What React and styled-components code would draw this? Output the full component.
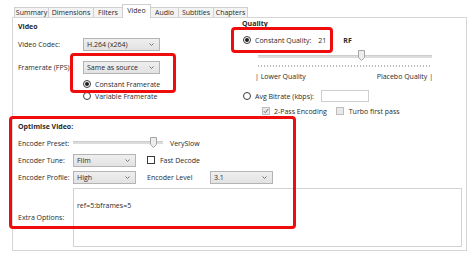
import React from "react";
import styled, { createGlobalStyle } from "styled-components";

const Global = createGlobalStyle`
  html, body { margin: 0; padding: 0; background: #fff; }
  body {
    font-family: "Open Sans", "Noto Sans", sans-serif;
    font-size: 7px;
    color: #2a2a2a;
  }
  * { box-sizing: border-box; }
`;

const Page = styled.div`
  position: relative;
  width: 474px;
  height: 259px;
  overflow: hidden;
  padding: 4px 0 0 12px;
`;

const TabStrip = styled.div`
  display: flex;
  align-items: flex-end;
  height: 13px;
  margin-left: 2px;
  position: relative;
  z-index: 1;
`;

const Tab = styled.div`
  width: ${(p) => p.$w}px;
  height: ${(p) => (p.$active ? 14 : 10)}px;
  margin-bottom: ${(p) => (p.$active ? -1 : 0)}px;
  margin-left: -1px;
  border: 1px solid #cfcfcf;
  border-bottom: none;
  background: ${(p) => (p.$active ? "#fff" : "#f3f3f3")};
  display: flex;
  align-items: ${(p) => (p.$active ? "flex-start" : "center")};
  padding-top: ${(p) => (p.$active ? 2 : 0)}px;
  justify-content: center;
  white-space: nowrap;
  line-height: 8px;
  &:first-child { margin-left: 0; }
`;

const Panel = styled.div`
  width: 455px;
  height: 234px;
  border: 1px solid #d6d6d6;
  padding-left: 5px;
  display: flex;
  flex-direction: column;
`;

const TopSection = styled.div`
  display: flex;
  height: 102px;
`;

const LeftCol = styled.div`
  width: 222px;
  display: flex;
  flex-direction: column;
`;

const RightCol = styled.div`
  flex: 1;
  display: flex;
  flex-direction: column;
`;

const BottomSection = styled.div`
  display: flex;
  flex-direction: column;
`;

const GroupTitle = styled.div`
  height: ${(p) => p.$h}px;
  margin-top: ${(p) => p.$mt || 0}px;
  padding-left: ${(p) => p.$pl || 0}px;
  display: flex;
  align-items: center;
  font-weight: 700;
  white-space: nowrap;
`;

const Row = styled.div`
  display: flex;
  align-items: center;
  height: ${(p) => p.$h}px;
  margin-top: ${(p) => p.$mt || 0}px;
  padding-left: ${(p) => p.$pl || 0}px;
  white-space: nowrap;
`;

const Label = styled.span`
  width: ${(p) => p.$w}px;
  flex: none;
`;

const Text = styled.span`
  margin-left: ${(p) => p.$ml || 0}px;
  width: ${(p) => (p.$w ? `${p.$w}px` : "auto")};
  flex: none;
  font-weight: ${(p) => (p.$bold ? 700 : 400)};
  color: ${(p) => (p.$muted ? "#555" : "inherit")};
`;

const SelectBox = styled.div`
  width: ${(p) => p.$w}px;
  height: 13px;
  flex: none;
  border: 1px solid #b4b4b4;
  background: linear-gradient(#efefef, #e2e2e2);
  display: flex;
  align-items: center;
  justify-content: space-between;
  padding: 0 5px 0 3px;
`;

const Chevron = () => (
  <svg width="5" height="3" viewBox="0 0 5 3">
    <path d="M0.5 0.5 L2.5 2.5 L4.5 0.5" fill="none" stroke="#6a6a6a" strokeWidth="0.9" />
  </svg>
);

const Select = ({ children, w }) => (
  <SelectBox $w={w}>
    <span>{children}</span>
    <Chevron />
  </SelectBox>
);

const Radio = styled.span`
  width: 8px;
  height: 8px;
  flex: none;
  border-radius: 50%;
  border: 1px solid #3a3a3a;
  background: #fff;
  display: inline-flex;
  align-items: center;
  justify-content: center;
  &::after {
    content: "";
    width: 4px;
    height: 4px;
    border-radius: 50%;
    background: #1e1e1e;
    display: ${(p) => (p.$checked ? "block" : "none")};
  }
`;

const CheckBox = styled.span`
  width: 8px;
  height: 8px;
  flex: none;
  margin-left: ${(p) => p.$ml || 0}px;
  border: 1px solid ${(p) => (p.$disabled ? "#bdbdbd" : "#3a3a3a")};
  background: ${(p) => (p.$disabled ? "#e9e9e9" : "#fff")};
  display: inline-flex;
  align-items: center;
  justify-content: center;
`;

const Check = () => (
  <svg width="6" height="6" viewBox="0 0 6 6">
    <path d="M0.8 3.2 L2.3 4.7 L5.2 1" fill="none" stroke="#6d6d6d" strokeWidth="1" />
  </svg>
);

const Slider = styled.div`
  position: relative;
  width: ${(p) => p.$w}px;
  height: 13px;
  flex: none;
  margin-left: ${(p) => p.$ml || 0}px;
  margin-top: ${(p) => p.$mt || 0}px;
  &::before {
    content: "";
    position: absolute;
    left: 0;
    right: 0;
    top: ${(p) => p.$trackTop}px;
    height: 2px;
    background: #dcdcdc;
    border-top: 1px solid #cdcdcd;
  }
`;

const ThumbWrap = styled.span`
  position: absolute;
  top: 0;
  display: block;
  width: 7px;
  height: 11px;
`;

const Thumb = ({ left }) => (
  <ThumbWrap style={{ left }}>
    <svg width="7" height="11" viewBox="0 0 7 11">
      <path d="M0.5 0.5 H6.5 V7.5 L3.5 10.5 L0.5 7.5 Z" fill="#ededed" stroke="#a5a5a5" />
    </svg>
  </ThumbWrap>
);

const Ticks = styled.div`
  width: ${(p) => p.$w}px;
  height: 2px;
  margin-left: ${(p) => p.$ml}px;
  margin-top: ${(p) => p.$mt}px;
  background: repeating-linear-gradient(90deg, #b9b9b9 0 1px, transparent 1px 3px);
`;

const ScaleLabels = styled.div`
  width: ${(p) => p.$w}px;
  height: 10px;
  margin-left: ${(p) => p.$ml}px;
  margin-top: ${(p) => p.$mt}px;
  display: flex;
  align-items: center;
  justify-content: space-between;
  white-space: nowrap;
`;

const InputBox = styled.span`
  width: ${(p) => p.$w}px;
  height: 12px;
  margin-left: ${(p) => p.$ml || 0}px;
  flex: none;
  border: 1px solid #cfcfcf;
  background: #fff;
`;

const TextArea = styled.div`
  width: 389px;
  height: 59px;
  flex: none;
  border: 1px solid #d2d2d2;
  padding: 12px 0 0 3px;
  background: #fff;
`;

const Callout = styled.div`
  position: absolute;
  left: ${(p) => p.$x}px;
  top: ${(p) => p.$y}px;
  width: ${(p) => p.$w}px;
  height: ${(p) => p.$h}px;
  border: 3px solid #ee0c0c;
  border-radius: 4px;
  pointer-events: none;
  z-index: 5;
`;

const tabs = [
  ["Summary", 35],
  ["Dimensions", 46],
  ["Filters", 30],
  ["Video", 29],
  ["Audio", 29],
  ["Subtitles", 36],
  ["Chapters", 35],
];

export default function App() {
  return (
    <Page>
      <Global />
      <TabStrip>
        {tabs.map(([t, w]) => (
          <Tab key={t} $w={w} $active={t === "Video"}>
            {t}
          </Tab>
        ))}
      </TabStrip>
      <Panel>
        <TopSection>
          <LeftCol>
            <GroupTitle $h={14} $mt={1}>Video</GroupTitle>
            <Row $h={14} $mt={4}>
              <Label $w={65}>Video Codec:</Label>
              <Select w={77}>H.264 (x264)</Select>
            </Row>
            <Row $h={14} $mt={9}>
              <Label $w={65}>Framerate (FPS):</Label>
              <Select w={77}>Same as source</Select>
            </Row>
            <Row $h={12} $mt={4} $pl={65}>
              <Radio $checked />
              <Text $ml={4}>Constant Framerate</Text>
            </Row>
            <Row $h={12} $pl={65}>
              <Radio />
              <Text $ml={4}>Variable Framerate</Text>
            </Row>
          </LeftCol>
          <RightCol>
            <GroupTitle $h={10} $pl={2}>Quality</GroupTitle>
            <Row $h={14} $mt={5} $pl={3}>
              <Radio $checked />
              <Text $ml={4}>Constant Quality:</Text>
              <Text $ml={7}>21</Text>
              <Text $ml={17} $bold>RF</Text>
            </Row>
            <Slider $w={174} $ml={18} $mt={3} $trackTop={5}>
              <Thumb left={100} />
            </Slider>
            <Ticks $w={174} $ml={18} $mt={2} />
            <ScaleLabels $w={178} $ml={15} $mt={4}>
              <span>| Lower Quality</span>
              <span>Placebo Quality |</span>
            </ScaleLabels>
            <Row $h={14} $mt={8} $pl={3}>
              <Radio />
              <Text $ml={4}>Avg Bitrate (kbps):</Text>
              <InputBox $w={48} $ml={7} />
            </Row>
            <Row $h={12} $mt={2} $pl={22}>
              <CheckBox $disabled>
                <Check />
              </CheckBox>
              <Text $ml={4}>2-Pass Encoding</Text>
              <CheckBox $disabled $ml={9} />
              <Text $ml={5}>Turbo first pass</Text>
            </Row>
          </RightCol>
        </TopSection>
        <BottomSection>
          <GroupTitle $h={12}>Optimise Video:</GroupTitle>
          <Row $h={14} $mt={4}>
            <Label $w={55}>Encoder Preset:</Label>
            <Slider $w={90} $trackTop={4}>
              <Thumb left={77} />
            </Slider>
            <Text $ml={7}>VerySlow</Text>
          </Row>
          <Row $h={14} $mt={3}>
            <Label $w={55}>Encoder Tune:</Label>
            <Select w={63}>Film</Select>
            <CheckBox $ml={11} />
            <Text $ml={5}>Fast Decode</Text>
          </Row>
          <Row $h={14} $mt={3}>
            <Label $w={55}>Encoder Profile:</Label>
            <Select w={63}>High</Select>
            <Text $ml={11} $w={63}>Encoder Level</Text>
            <Select w={63}>3.1</Select>
          </Row>
          <Row $h={59} $mt={4}>
            <Label $w={55}>Extra Options:</Label>
            <TextArea>ref=5:bframes=5</TextArea>
          </Row>
        </BottomSection>
      </Panel>
      <Callout $x={70} $y={53} $w={106} $h={40} />
      <Callout $x={231} $y={27} $w={102} $h={26} />
      <Callout $x={9} $y={116} $w={287} $h={113} />
    </Page>
  );
}
